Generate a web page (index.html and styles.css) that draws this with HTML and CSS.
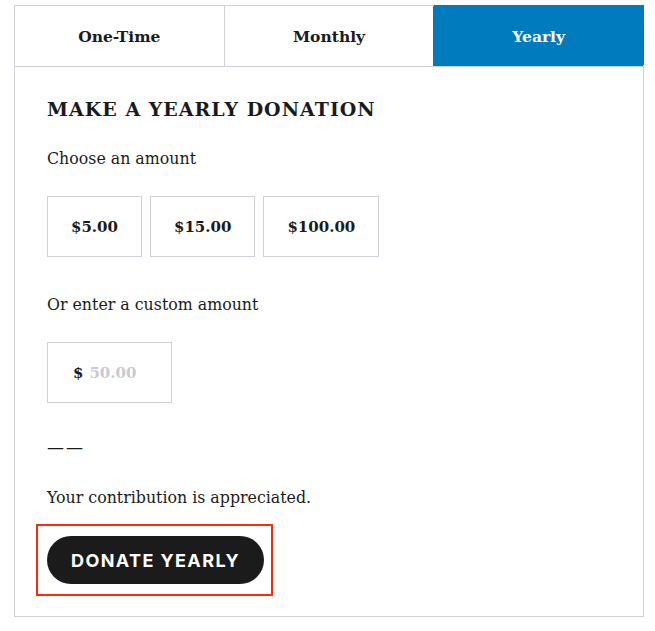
FILE: index.html
```html
<!DOCTYPE html>
<html lang="en">
<head>
<meta charset="utf-8">
<title>Donate</title>
<link rel="stylesheet" href="styles.css">
</head>
<body>
<div class="donate">
  <div class="tabs">
    <div class="tab">One-Time</div>
    <div class="tab">Monthly</div>
    <div class="tab active">Yearly</div>
  </div>
  <div class="panel">
    <h2 class="title">MAKE A YEARLY DONATION</h2>
    <p class="label">Choose an amount</p>
    <div class="amounts">
      <div class="amount">$5.00</div>
      <div class="amount">$15.00</div>
      <div class="amount">$100.00</div>
    </div>
    <p class="label custom-label">Or enter a custom amount</p>
    <div class="custom"><span class="cur">$</span><span class="ph">50.00</span></div>
    <p class="dash">——</p>
    <p class="thanks">Your contribution is appreciated.</p>
    <div class="highlight">
      <div class="btn">DONATE YEARLY</div>
    </div>
  </div>
</div>
</body>
</html>
```
FILE: styles.css
```css
body {
  margin: 0;
  background: #fff;
  font-family: "DejaVu Serif", "Liberation Serif", serif;
  color: #1b1b1b;
}
.donate {
  margin: 5px 0 0 14px;
  width: 628px;
  border: 1px solid #cfd0d8;
}
.tabs {
  display: flex;
  border-bottom: 1px solid #cfd0d8;
}
.tab {
  flex: 1;
  height: 60px;
  display: flex;
  align-items: center;
  justify-content: center;
  font-weight: bold;
  font-size: 15.5px;
}
.tab + .tab {
  border-left: 1px solid #cfd0d8;
}
.tab.active {
  background: #007bbd;
  color: #fff;
  border-left-color: #007bbd;
  box-shadow: 1px -1px 0 0 #007bbd;
}
.panel {
  padding: 30px 32px 20px;
}
.title {
  margin: 0;
  font-size: 19px;
  line-height: 24px;
  letter-spacing: 1px;
  font-weight: bold;
}
.label {
  margin: 26px 0 0;
  font-size: 15.8px;
  line-height: 24px;
}
.amounts {
  display: flex;
  gap: 8px;
  margin-top: 25px;
}
.amount {
  height: 59px;
  padding: 0 23px;
  border: 1px solid #cfd0d8;
  display: flex;
  align-items: center;
  font-weight: bold;
  font-size: 15px;
}
.custom-label {
  margin-top: 36px;
}
.custom {
  margin-top: 25px;
  width: 98px;
  height: 59px;
  padding: 0 0 0 25px;
  border: 1px solid #cfd0d8;
  display: flex;
  align-items: center;
  font-weight: bold;
  font-size: 15px;
}
.cur {
  margin-right: 6px;
}
.ph {
  color: #c9cad1;
}
.dash {
  margin: 32px 0 0;
  font-size: 17px;
  line-height: 24px;
  letter-spacing: 2px;
}
.thanks {
  margin: 27px 0 0;
  font-size: 15.8px;
  line-height: 24px;
}
.highlight {
  display: flex;
  width: fit-content;
  margin: 14px 0 0 -11px;
  padding: 10px 7px 10px 9px;
  border: 2px solid #ff2a0a;
}
.btn {
  width: 217px;
  height: 48px;
  border-radius: 24px;
  background: #1b1b1b;
  color: #fff;
  display: flex;
  align-items: center;
  justify-content: center;
  font-family: Inter, "Noto Sans", sans-serif;
  font-weight: 700;
  font-size: 18px;
  letter-spacing: 1.4px;
}
```
